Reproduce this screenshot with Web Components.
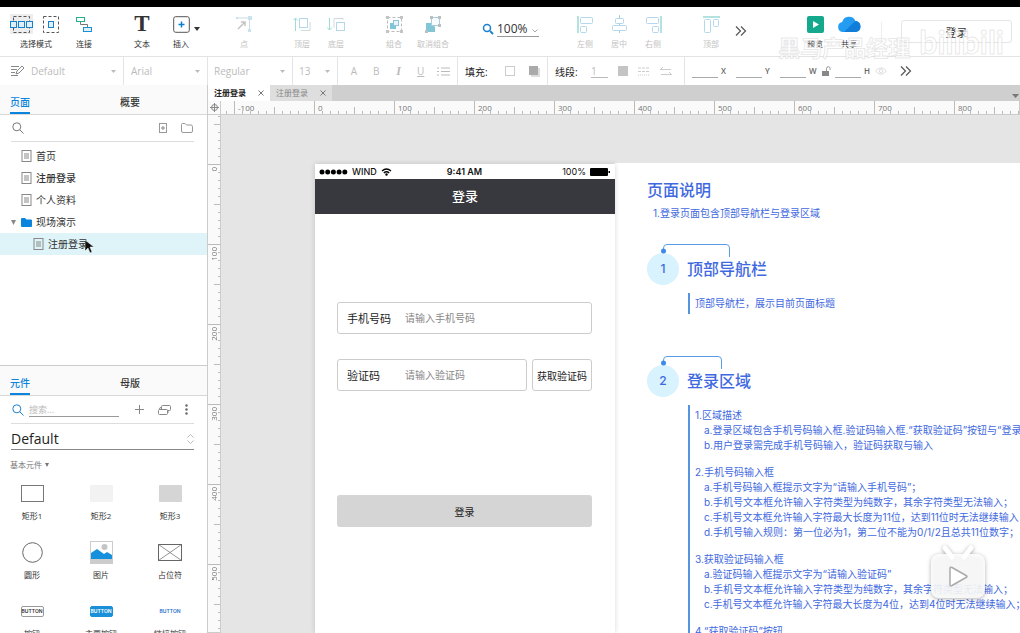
<!DOCTYPE html>
<html lang="zh-CN">
<head>
<meta charset="utf-8">
<title>注册登录</title>
<style>
html, body { margin: 0; height: 100%; }
body { overflow: hidden; font-family: "Open Sans", "Noto Sans CJK SC", sans-serif; color: #333; background: #fff; }
</style>
</head>
<body>
<ax-app></ax-app>
<script>
const BASE = `
*, *::before, *::after { box-sizing: border-box; }
button, input, select { font: inherit; color: inherit; border: 0; padding: 0; margin: 0; background: none; border-radius: 0; outline: 0; min-width: 0; }
select { appearance: none; }
svg { display: block; fill: none; flex: none; }
:host { box-sizing: border-box; }
`;
const svg = (w, h, body, extra = '') => `<svg width="${w}" height="${h}" viewBox="0 0 ${w} ${h}" aria-hidden="true" ${extra}>${body}</svg>`;

const ICONS = {
  select: svg(52, 20, `<rect x="0" y="0" width="23" height="20" fill="#ededed"/><rect x="3.500" y="2.500" width="16" height="16" stroke="#555" stroke-dasharray="3 2"/><g fill="#dff0fb" stroke="#1a80cc"><rect x=".5" y="7.500" width="6" height="6"/><rect x="8.500" y="7.500" width="6" height="6"/><rect x="16.500" y="7.500" width="6" height="6"/></g><rect x="33.500" y="2.500" width="15" height="16" stroke="#555" stroke-dasharray="3 2"/><rect x="38.500" y="7.500" width="5" height="6" fill="#dff0fb" stroke="#1a80cc"/>`),
  connect: svg(18, 20, `<rect x="1.500" y="3.500" width="8" height="4" stroke="#20b090"/><path d="M5.500 8v2.500h7V13" stroke="#777"/><rect x="8.500" y="13.500" width="8" height="4" fill="#dff0fb" stroke="#1a90d8"/>`),
  insert: svg(17, 20, `<rect x=".7" y="2.700" width="15.600" height="15.600" rx="2" stroke="#555"/><path d="M8.500 7.500v6M5.500 10.500h6" stroke="#0a7fd0" stroke-width="1.500"/>`),
  point: svg(18, 20, `<path d="M2 4h12.500v13" stroke="#ccdbe4"/><path d="M3 15l7-7M10 12V8H6" stroke="#c4c4c4" stroke-width="1.500"/><g fill="#c8e2ef"><rect x="13" y="2" width="4" height="4"/><rect x="13" y="15" width="3" height="3"/><rect x="1" y="3" width="2" height="2"/></g>`),
  front: svg(18, 20, `<path d="M2.500 17V4M0 6.500L2.500 4 5 6.500" stroke="#9fdad3"/><rect x="6.500" y="4.500" width="8" height="9" stroke="#b3d8ec"/><path d="M8 16.500h9V8" stroke="#cfdbe1"/>`),
  back: svg(18, 20, `<path d="M2.500 4v12M0 13.500L2.500 16 5 13.500" stroke="#9fdad3"/><rect x="9.500" y="8.500" width="8" height="8" stroke="#b3d8ec"/><path d="M7 13.500V4.500h9V6" stroke="#cfdbe1"/>`),
  group: svg(17, 20, `<rect x="1.500" y="3.500" width="14" height="14" stroke="#bcbcbc" stroke-dasharray="3 2"/><rect x="4" y="9" width="6" height="6" fill="#7ec6d8"/><rect x="7.500" y="6.500" width="5" height="5" fill="#e8f4fa" stroke="#8fc4e0"/><g fill="#c4c4c4"><rect y="2" width="3" height="3"/><rect x="14" y="2" width="3" height="3"/><rect y="16" width="3" height="3"/><rect x="14" y="16" width="3" height="3"/></g>`),
  ungroup: svg(17, 20, `<path d="M1 9h6l3 4v5H1z" fill="#80c6d5"/><rect x="6.500" y="3.500" width="8" height="8" fill="#fafdff" stroke="#a9cfe2"/><g fill="#b9bfc2"><rect x="5" y="2" width="3" height="3"/><rect x="13" y="2" width="3" height="3"/><rect x="13" y="10" width="3" height="3"/><rect x="0" y="16" width="3" height="3"/></g>`),
  left: svg(17, 20, `<path d="M1 2v17" stroke="#9ad8d4" stroke-width="1.500"/><rect x="3.500" y="3.500" width="12" height="6" rx="1" stroke="#b5d7ec"/><rect x="3.500" y="12.500" width="6" height="6" rx="1" stroke="#b5d7ec"/>`),
  center: svg(17, 20, `<path d="M8.500 1v18" stroke="#9ad8d4"/><rect x="4.500" y="4.500" width="8" height="5" rx="1" fill="#fff" stroke="#b5d7ec"/><rect x="1.500" y="11.500" width="14" height="5" rx="1" fill="#fff" stroke="#b5d7ec"/>`),
  right: svg(17, 20, `<path d="M16 2v17" stroke="#9ad8d4" stroke-width="1.500"/><rect x="1.500" y="3.500" width="12" height="6" rx="1" stroke="#b5d7ec"/><rect x="7.500" y="12.500" width="6" height="6" rx="1" stroke="#b5d7ec"/>`),
  top: svg(17, 20, `<path d="M0 3h17" stroke="#9ad8d4" stroke-width="1.500"/><rect x="1.500" y="5.500" width="6" height="13" rx="1" stroke="#b5d7ec"/><rect x="10.500" y="5.500" width="5" height="7" rx="1" stroke="#b5d7ec"/>`),
  preview: svg(17, 20, `<rect y="2" width="17" height="17" rx="2" fill="#14a88c"/><path d="M6 7l6 3.500L6 14z" fill="#fff"/>`),
  share: svg(25, 20, `<path d="M6 18a5 5 0 0 1-.8-9.900A7 7 0 0 1 18.500 7 5.600 5.600 0 0 1 19 18z" fill="#249cf2"/><path d="M19 18H7l10-10 2-1a5.600 5.600 0 0 1 0 11z" fill="#117fd9"/>`),
  more: svg(12, 12, `<path d="M1 1.500L5.500 6 1 10.500M6 1.500L10.500 6 6 10.500" stroke="#555" stroke-width="1.200"/>`),
  caret: svg(6, 4, `<path d="M0 0h6L3 4z" fill="#333"/>`),
  page: svg(10, 12, `<rect x=".5" y=".5" width="9" height="11" stroke="#888"/><path d="M2.500 4h5M2.500 6h5M2.500 8h5" stroke="#888"/>`),
  folder: svg(11, 9, `<path d="M0 1q0-1 1-1h3l1.500 1.500H10q1 0 1 1V8q0 1-1 1H1q-1 0-1-1z" fill="#0a84dc"/>`),
  search: c => svg(12, 12, `<circle cx="4.800" cy="4.800" r="4" stroke="${c}"/><path d="M8 8l3.500 3.500" stroke="${c}"/>`),
};

function define(name, render, styles) {
  customElements.define(name, class extends HTMLElement {
    constructor() {
      super();
      this.attachShadow({ mode: 'open' });
    }
    connectedCallback() {
      if (this.shadowRoot.firstChild) return;
      const t = document.createElement('template');
      t.innerHTML = `<style>${BASE}${styles}</style>${render(this)}`;
      this.shadowRoot.append(t.content.cloneNode(true));
    }
  });
}

/* ---------- top toolbar ---------- */
define('ax-tool', el => `<button ${el.hasAttribute('disabled') ? 'disabled' : ''}>
  <span class="icon">${el.getAttribute('icon') === 'text' ? '<b>T</b>' : ICONS[el.getAttribute('icon')]}${el.hasAttribute('menu') ? `<i>${ICONS.caret}</i>` : ''}</span>
  <span><slot></slot></span></button>`, `
:host { display: block; flex: none; width: 34px; }
:host([wide]) { width: 52px; }
button { display: flex; flex-direction: column; align-items: center; gap: 5px; width: 100%; font-size: 8px; line-height: 10px; white-space: nowrap; color: #333; }
button:disabled { color: #c2c2c2; }
.icon { position: relative; height: 20px; }
b { font: 700 23px/20px "Liberation Serif", serif; }
i { position: absolute; left: 21px; top: 13px; }
`);

define('ax-toolbar', () => `
<ax-tool wide icon="select">选择模式</ax-tool>
<ax-tool class="s" icon="connect">连接</ax-tool>
<ax-tool class="l" icon="text">文本</ax-tool>
<ax-tool class="s" icon="insert" menu>插入</ax-tool>
<ax-tool class="xl" icon="point" disabled>点</ax-tool>
<ax-tool class="l" icon="front" disabled>顶层</ax-tool>
<ax-tool icon="back" disabled>底层</ax-tool>
<ax-tool class="l" icon="group" disabled>组合</ax-tool>
<ax-tool class="s" icon="ungroup" disabled>取消组合</ax-tool>
<label class="zoom">${svg(12, 12, '<circle cx="5" cy="5" r="3.500" stroke="#1a80d0" stroke-width="1.500"/><path d="M8 8l3 3" stroke="#1a80d0" stroke-width="1.800"/>')}
<select aria-label="缩放"><option>100%</option></select>${svg(6, 4, '<path d="M.5.5L3 3 5.500.5" stroke="#aaa"/>', 'class="c"')}</label>
<ax-tool class="l" icon="left" disabled>左侧</ax-tool>
<ax-tool icon="center" disabled>居中</ax-tool>
<ax-tool icon="right" disabled>右侧</ax-tool>
<ax-tool class="l" icon="top" disabled>顶部</ax-tool>
<button class="more" aria-label="更多">${ICONS.more}</button>
<div class="end"><ax-tool icon="preview">预览</ax-tool><ax-tool icon="share">共享</ax-tool><hr><button class="login">登录</button></div>
<div class="mark"><span>黑马产品经理</span><em>bilibili</em></div>
`, `
:host { position: relative; display: flex; flex: none; height: 50px; padding: 7px 8px 0 10px; border-bottom: 1px solid #e4e4e4; background: #fff; }
.s { margin-left: 5px; } .l { margin-left: 24px; } .xl { margin-left: 29px; }
.zoom { position: relative; display: flex; align-items: center; gap: 3px; height: 16px; margin: 7px 5px 0 32px; }
.zoom select { width: 42px; height: 16px; border-bottom: 1px solid #999; font-size: 12px; line-height: 14px; color: #333; }
.zoom .c { position: absolute; right: 1px; top: 8px; }
.more { align-self: flex-start; margin: 11px 0 0 7px; }
.end { display: flex; margin-left: auto; }
hr { width: 1px; height: 22px; margin: 8px 19px 0 15px; border: 0; background: #eee; }
.login { width: 111px; height: 23px; margin-top: 6px; border: 1px solid #e6e6e6; border-radius: 3px; font-size: 11px; }
.mark { position: absolute; right: 16px; top: 16px; display: flex; align-items: center; gap: 9px; color: rgba(255,255,255,.75); -webkit-text-stroke: 1px rgba(190,190,190,.35); white-space: nowrap; pointer-events: none; z-index: 2; }
.mark span { padding-top: 10px; font-size: 22px; line-height: 28px; font-weight: 700; }
.mark em { font: 700 32px/36px Lato, sans-serif; }
`);

/* ---------- format bar ---------- */
define('ax-pick', el => `<select disabled aria-label="${el.getAttribute('label')}"><option>${el.getAttribute('value')}</option></select>${svg(5, 3, '<path d="M0 0h5L2.500 3z" fill="#bbb"/>')}`, `
:host { display: flex; align-items: center; width: 100%; }
select { flex: 1; font-size: 10px; line-height: 14px; color: #bbb; opacity: 1; }
`);
define('ax-coord', el => `<label><input aria-label="${el.textContent}" disabled><b><slot></slot></b></label>`, `
:host { display: block; }
label { display: flex; align-items: center; gap: 3px; }
input { width: 26px; height: 13px; border-bottom: 1px solid #aaa; }
b { width: 9px; font-size: 8px; line-height: 12px; font-weight: 600; color: #666; }
`);
define('ax-format-bar', () => `
<div class="cell a">${svg(13, 12, '<path d="M0 1.500h8M0 4.500h6M0 7.500h4M0 10.500h7" stroke="#888"/><path d="M5 9l1-3 5-5 2 2-5 5z" fill="#fff" stroke="#888"/>')}<ax-pick label="样式" value="Default"></ax-pick></div>
<div class="cell b"><ax-pick label="字体" value="Arial"></ax-pick></div>
<div class="cell c"><ax-pick label="字重" value="Regular"></ax-pick></div>
<div class="cell d"><ax-pick label="字号" value="13"></ax-pick></div>
<div class="cell e"><button>A</button><button>B</button><button><i>I</i></button><button><u>U</u></button><button aria-label="列表">${svg(13, 9, '<path d="M0 1h2M0 4.500h2M0 8h2M4 1h9M4 4.500h9M4 8h9" stroke="#bbb"/>')}</button></div>
<div class="cell f"><span>填充:</span>${svg(10, 10, '<rect x=".5" y=".5" width="9" height="9" stroke="#ccc"/>')}${svg(11, 11, '<rect x="2" y="2" width="9" height="9" fill="#ddd"/><rect width="9" height="9" fill="#aaa"/>')}</div>
<div class="cell g"><span>线段:</span><input value="1" aria-label="线宽" disabled>${svg(10, 10, '<rect width="10" height="10" fill="#c4c4c4"/>')}${svg(12, 9, '<path d="M0 1h12M0 4.500h12" stroke="#ccc" stroke-dasharray="3 1"/><path d="M0 8h12" stroke="#ccc" stroke-dasharray="1 1"/>')}${svg(12, 9, '<path d="M0 2.500h11M3 0L.5 2.500M1 7.500h11M9 5l2.500 2.500" stroke="#ccc"/>')}</div>
<div class="cell h"><ax-coord>X</ax-coord><ax-coord>Y</ax-coord><ax-coord>W</ax-coord>${svg(9, 10, '<rect y="5" width="7" height="5" fill="#888"/><path d="M4.500 5V2.500a1.800 1.800 0 0 1 3.600 0V4" stroke="#999"/>', 'class="lock"')}<ax-coord>H</ax-coord>${svg(12, 8, '<path d="M.5 4Q6-2.500 11.500 4 6 10.500.5 4z" stroke="#ddd"/><circle cx="6" cy="4" r="1.800" stroke="#ddd"/>', 'class="eye"')}<button aria-label="更多">${ICONS.more}</button></div>
`, `
:host { display: flex; flex: none; height: 28px; background: #fff; font-size: 10px; }
.cell { display: flex; align-items: center; flex: none; border-right: 1px solid #e4e4e4; }
.a { width: 124px; padding: 0 7px 0 11px; gap: 7px; }
.b { width: 84px; padding: 0 7px; }
.c { width: 85px; padding: 0 7px 0 6px; }
.d { width: 45px; padding: 0 7px 0 6px; }
.e { width: 120px; justify-content: space-between; padding: 0 8px 0 10px; color: #bbb; }
.e button { display: flex; justify-content: center; width: 12px; line-height: 14px; }
.e i { font-family: "Liberation Serif", serif; font-size: 12px; font-weight: 700; }
.f { width: 90px; padding-left: 7px; gap: 14px; }
.f span, .g span { width: 26px; color: #222; }
.g { width: 137px; padding-left: 7px; gap: 10px; }
.g input { width: 17px; height: 14px; border-bottom: 1px solid #bbb; color: #bbb; }
.h { flex: 1; border: 0; padding-left: 7px; gap: 6px; }
.lock { margin: 0 -2px 0 -2px; } .eye { margin-left: -4px; } .h button { margin-left: 7px; }
`);

/* ---------- side panels ---------- */
define('ax-panel-tabs', el => { const [a, b] = el.getAttribute('tabs').split(','); return `<button class="on" role="tab" aria-selected="true">${a}</button><button role="tab">${b}</button>`; }, `
:host { display: flex; flex: none; gap: 90px; height: 30px; padding: 4px 10px 0; border-bottom: 1px solid #d8d8d8; background: #fafafa; }
button { width: 20px; border-bottom: 2px solid transparent; font-size: 10px; line-height: 26px; font-weight: 500; white-space: nowrap; color: #333; }
.on { color: #0a84dc; border-color: #0a84dc; }
`);
define('ax-page', el => `<i>${el.hasAttribute('folder') ? svg(5, 5, '<path d="M0 0h5L2.500 5z" fill="#888"/>') : ''}</i>${el.hasAttribute('folder') ? ICONS.folder : ICONS.page}<a href="#"><slot></slot>${el.hasAttribute('selected') ? svg(9, 14, '<path d="M0 0v11l3-3 2 5 2-1-2-5h4z" fill="#111" stroke="#fff" stroke-width=".5"/>') : ''}</a>`, `
:host { display: flex; align-items: center; height: 22px; padding-left: 11px; font-size: 10px; }
:host([selected]) { padding-left: 23px; background: #def4f8; }
:host([strong]) { font-weight: 500; }
i { width: 10px; }
i + svg { width: 11px; }
a { position: relative; margin-left: 4px; color: #333; text-decoration: none; line-height: 16px; }
a svg { position: absolute; right: -6px; top: 4px; }
`);
define('ax-pages-panel', () => `
<ax-panel-tabs tabs="页面,概要"></ax-panel-tabs>
<div class="tools"><button class="find" aria-label="搜索">${ICONS.search('#777')}</button>
<button aria-label="添加页面">${svg(9, 10, '<rect x=".5" y=".5" width="7" height="9" stroke="#999"/><path d="M4 3v4M2 5h4" stroke="#888"/>')}</button>
<button aria-label="添加文件夹">${svg(12, 10, '<path d="M.5 1.500q0-1 1-1H4l1.500 1.500H10q1.500 0 1.500 1.500V8q0 1.500-1.500 1.500H2Q.5 9.500.5 8z" stroke="#999"/>')}</button></div>
<nav><ax-page>首页</ax-page><ax-page strong>注册登录</ax-page><ax-page>个人资料</ax-page><ax-page folder>现场演示</ax-page><ax-page selected>注册登录</ax-page></nav>
`, `
:host { display: flex; flex-direction: column; flex: 281 1 0; min-height: 0; overflow: hidden; }
.tools { display: flex; align-items: center; gap: 13px; height: 27px; margin: 0 13px 3px 11px; padding: 0 1px; border-bottom: 1px solid #ddd; }
.find { margin-right: auto; }
`);

define('ax-widget', el => `<button><span>${el.querySelector('template').innerHTML}</span>${el.getAttribute('name')}</button>`, `
:host { display: block; width: 44px; }
button { display: flex; flex-direction: column; align-items: center; gap: 6px; width: 100%; font-size: 8px; line-height: 10px; white-space: nowrap; }
span { display: flex; align-items: center; justify-content: center; height: 24px; }
.btn { width: 23px; height: 11px; border: 1px solid #999; border-radius: 2px; font: 600 5px/9px Inter, sans-serif; text-align: center; }
.pri { background: #1a90d8; border-color: #1a90d8; color: #fff; }
.lnk { border: 0; color: #2a70c8; line-height: 11px; }
`);
const widget = (name, body) => `<ax-widget name="${name}"><template>${body}</template></ax-widget>`;
define('ax-library', () => `
<ax-panel-tabs tabs="元件,母版"></ax-panel-tabs>
<div class="tools"><label>${ICONS.search('#1a80d0')}<input placeholder="搜索..." aria-label="搜索元件"></label>
<button aria-label="添加">${svg(9, 9, '<path d="M4.500 0v9M0 4.500h9" stroke="#888"/>')}</button>
<button aria-label="元件库">${svg(13, 10, '<rect x="3.500" y=".5" width="9" height="5" rx="1" stroke="#888"/><path d="M3 2.500q-1.500 0-1.500 1.500v1M10 8V6" stroke="#888"/><rect x=".5" y="4.500" width="9" height="5" rx="1" fill="#fff" stroke="#888"/>')}</button>
<button aria-label="菜单">${svg(3, 11, '<g fill="#666"><circle cx="1.500" cy="1.500" r="1.200"/><circle cx="1.500" cy="5.500" r="1.200"/><circle cx="1.500" cy="9.500" r="1.200"/></g>')}</button></div>
<div class="lib"><select aria-label="元件库"><option>Default</option></select>${svg(7, 10, '<path d="M.5 3.500l3-3 3 3M.5 6.500l3 3 3-3" stroke="#bbb"/>')}</div>
<button class="cat">基本元件 ${svg(4, 4, '<path d="M0 0h4L2 4z" fill="#777"/>')}</button>
<div class="grid">
${widget('矩形1', svg(23, 17, '<rect x=".5" y=".5" width="22" height="16" stroke="#777"/>'))}
${widget('矩形2', svg(23, 17, '<rect width="23" height="17" rx="1" fill="#f2f2f2"/>'))}
${widget('矩形3', svg(23, 17, '<rect width="23" height="17" rx="1" fill="#d5d5d5"/>'))}
${widget('圆形', svg(21, 21, '<circle cx="10.500" cy="10.500" r="9.800" stroke="#666"/>'))}
${widget('图片', svg(23, 23, '<rect x=".5" y=".5" width="22" height="22" fill="#fff" stroke="#ccc"/><circle cx="14.500" cy="6" r="3" fill="#c4c4c4"/><path d="M1 18v-6l6-4 7 5 3-2 5 3v4z" fill="#1590dc"/><path d="M0 18h23v5H0z" fill="#ccc"/>'))}
${widget('占位符', svg(24, 17, '<rect x=".5" y=".5" width="23" height="16" stroke="#666"/><path d="M.5.5l23 16M23.500.5l-23 16" stroke="#777" stroke-width=".8"/>'))}
${widget('按钮', '<div class="btn">BUTTON</div>')}
${widget('主要按钮', '<div class="btn pri">BUTTON</div>')}
${widget('链接按钮', '<div class="btn lnk">BUTTON</div>')}
</div>`, `
:host { display: flex; flex-direction: column; flex: 267 1 0; min-height: 0; overflow: hidden; border-top: 1px solid #ccc; }
.tools { display: flex; flex: none; align-items: center; gap: 14px; height: 28px; margin: 0 13px 0 11px; padding: 0 6px 0 1px; border-bottom: 1px solid #ddd; }
label { display: flex; align-items: center; gap: 5px; flex: 1; }
input { flex: 1; width: 40px; height: 15px; border-bottom: 1px solid #999; font-size: 9px; }
input::placeholder { color: #bbb; }
.tools button:first-of-type { margin-left: 2px; }
.lib { display: flex; flex: none; align-items: center; height: 26px; margin: 0 13px 0 11px; padding-top: 5px; border-bottom: 1px solid #888; }
.lib select { flex: 1; font-size: 14px; line-height: 20px; color: #222; }
.cat { display: flex; align-items: center; gap: 3px; margin: 9px 10px 10px; font-size: 8px; line-height: 12px; color: #777; }
.grid { display: grid; grid-template-columns: repeat(3, 44px); justify-content: space-between; row-gap: 19px; padding: 0 15px 0 10px; }
`);

/* ---------- workspace ---------- */
define('ax-doc-tabs', () => `<button class="on">注册登录<i>${svg(6, 6, '<path d="M.5.5l5 5M5.500.5l-5 5" stroke="#777"/>')}</i></button><button>注册登录<i>${svg(6, 6, '<path d="M.5.5l5 5M5.500.5l-5 5" stroke="#777"/>')}</i></button><span>${svg(7, 4, '<path d="M0 0h7L3.500 4z" fill="#777"/>')}</span>`, `
:host { display: flex; flex: none; height: 16px; background: #cfcfcf; }
button { display: flex; align-items: center; justify-content: space-between; width: 62px; padding: 0 6px; font-size: 8px; line-height: 14px; background: #dedede; color: #888; }
.on { background: #fff; color: #222; font-weight: 700; }
span { margin: 9px 1px 0 auto; }
`);
const ticks = v => svg(v ? 13 : 80, v ? 80 : 13, Array.from({ length: 10 }, (_, i) => {
  const p = i * 8 + .5, s = i === 0 ? 0 : i === 5 ? 6 : 10;
  return v ? `<path d="M${s} ${p}H13" stroke="#bbb"/>` : `<path d="M${p} ${s}V13" stroke="#bbb"/>`;
}).join(''));
/* one cell per 100 canvas units, as many as the window can show */
define('ax-ruler', el => {
  const v = el.hasAttribute('vertical');
  const from = v ? -100 : -200;
  const n = Math.ceil((v ? innerHeight - 84 : innerWidth - 154) / 80);
  return Array.from({ length: n }, (_, i) => `<div>${ticks(v)}${i ? `<span>${from + i * 100}</span>` : ''}</div>`).join('');
}, `
:host { display: flex; overflow: hidden; min-width: 0; min-height: 0; background: #fafafa; font-size: 8px; line-height: 11px; color: #777; }
:host([vertical]) { flex-direction: column; }
div { position: relative; flex: none; width: 80px; height: 13px; }
:host([vertical]) div { width: 13px; height: 80px; }
div:first-of-type { margin-left: -67px; }
:host([vertical]) div:first-of-type { margin: -31px 0 0; }
span { position: absolute; left: 4px; top: 1px; }
:host([vertical]) span { left: 0; top: 3px; writing-mode: vertical-rl; transform: rotate(180deg); }
`);

define('ax-field', el => `<label><span>${el.getAttribute('label')}</span><input placeholder="${el.getAttribute('hint')}"></label>`, `
:host { display: block; flex: 1; min-width: 0; }
label { display: flex; align-items: center; height: 32px; padding: 0 9px; border: 1px solid #ccc; border-radius: 3px; background: #fff; }
span { flex: none; width: 58px; font-size: 11px; color: #222; }
input { flex: 1; font-size: 10px; }
input::placeholder { color: #888; }
`);
define('ax-phone', () => `
<div class="status"><span>${svg(29, 6, '<g fill="#000"><circle cx="3" cy="3" r="2.500"/><circle cx="8.700" cy="3" r="2.500"/><circle cx="14.400" cy="3" r="2.500"/><circle cx="20.100" cy="3" r="2.500"/><circle cx="25.800" cy="3" r="2.500"/></g>')} WIND ${svg(11, 8, '<path d="M1 3Q5.500-1 10 3M2.800 5Q5.500 2.500 8.200 5" stroke="#000" stroke-width="1.300"/><circle cx="5.500" cy="6.500" r="1.200" fill="#000"/>')}</span><b>9:41 AM</b><span class="r">100% ${svg(20, 8, '<rect width="18" height="8" rx="1" fill="#000"/><rect x="18.500" y="3" width="1.500" height="2" fill="#000"/>')}</span></div>
<header>登录</header>
<form><ax-field label="手机号码" hint="请输入手机号码"></ax-field>
<div><ax-field label="验证码" hint="请输入验证码"></ax-field><button type="button" class="code">获取验证码</button></div>
<button type="button" class="go">登录</button></form>`, `
:host { position: relative; z-index: 1; display: flex; flex-direction: column; flex: none; width: 300px; margin-top: 1px; background: #fff; box-shadow: 0 0 5px rgba(0,0,0,.16); color: #222; }
.status { display: grid; grid-template-columns: 1fr auto 1fr; align-items: center; height: 15px; padding: 0 5px 0 4px; font: 500 9px/15px Inter, sans-serif; color: #111; }
.status span { display: flex; align-items: center; gap: 4px; }
.status .r { justify-content: flex-end; font-weight: 400; }
.status b { font-weight: 600; }
header { height: 35px; background: #38393e; color: #fff; text-align: center; font-size: 13px; line-height: 34px; font-weight: 500; }
form { display: flex; flex-direction: column; padding: 88px 23px 0 22px; }
form > div { display: flex; gap: 5px; margin: 25px 0 104px; }
form > ax-field { flex: none; }
.code { width: 60px; border: 1px solid #ccc; border-radius: 3px; font-size: 10px; white-space: nowrap; }
.go { height: 32px; border-radius: 3px; background: #d5d5d5; font-size: 10px; }
`);

define('ax-note', el => {
  const w = +el.getAttribute('lead');
  return `${svg(w + 6, 14, `<path d="M3.500 7V4q0-3.500 3.500-3.500h${w - 8}q3.500 0 3.500 3.500v9" stroke="#5a9be8"/><circle cx="3.500" cy="7" r="2.500" fill="#3b8be8"/>`)}
  <h2><b>${el.getAttribute('n')}</b>${el.getAttribute('title')}</h2><div><slot></slot></div>`;
}, `
:host { position: relative; display: block; padding-top: 9px; }
svg { position: absolute; left: 13px; top: 0; }
h2 { display: flex; align-items: center; gap: 8px; margin: 0 0 8px; font-size: 16px; line-height: 32px; font-weight: 500; }
b { width: 32px; height: 32px; border-radius: 16px; background: #d8f2fe; text-align: center; font-size: 12px; font-weight: 500; }
div { margin-left: 41px; min-height: 21px; padding: 3px 0 3px 5px; border-left: 2px solid #5595e0; line-height: 15px; white-space: nowrap; }
`);
define('ax-notes', () => `
<h1>页面说明</h1><p class="sub">1.登录页面包含顶部导航栏与登录区域</p>
<ax-note n="1" title="顶部导航栏" lead="67">顶部导航栏，展示目前页面标题</ax-note>
<ax-note n="2" title="登录区域" lead="59">
<p>1.区域描述</p><ul><li>a.登录区域包含手机号码输入框.验证码输入框.“获取验证码”按钮与“登录”按钮</li><li>b.用户登录需完成手机号码输入，验证码获取与输入</li></ul>
<p>2.手机号码输入框</p><ul><li>a.手机号码输入框提示文字为“请输入手机号码”；</li><li>b.手机号文本框允许输入字符类型为纯数字，其余字符类型无法输入；</li><li>c.手机号文本框允许输入字符最大长度为11位，达到11位时无法继续输入；</li><li>d.手机号输入规则：第一位必为1，第二位不能为0/1/2且总共11位数字；</li></ul>
<p>3.获取验证码输入框</p><ul><li>a.验证码输入框提示文字为“请输入验证码”</li><li>b.手机号文本框允许输入字符类型为纯数字，其余字符类型无法输入；</li><li>c.手机号文本框允许输入字符最大长度为4位，达到4位时无法继续输入；</li></ul>
<p>4.“获取验证码”按钮</p></ax-note>`, `
:host { display: flex; flex-direction: column; flex: 1; min-width: 0; padding: 17px 0 0 32px; background: #fff; color: #3f69e0; font-family: Inter, "Noto Sans CJK SC", sans-serif; font-size: 10px; line-height: 15px; }
h1 { margin: 0 0 6px; font-size: 16px; line-height: 20px; font-weight: 500; }
p, ul { margin: 0; padding: 0; list-style: none; }
.sub { margin: 0 0 24px 6px; line-height: 14px; }
ax-note + ax-note { margin-top: 42px; }
ul { padding-left: 9px; margin-bottom: 12px; }
`);

define('ax-app', () => `
<div class="strip"></div>
<ax-toolbar></ax-toolbar><ax-format-bar></ax-format-bar>
<main><aside><ax-pages-panel></ax-pages-panel><ax-library></ax-library></aside>
<section><ax-doc-tabs></ax-doc-tabs>
<div class="work"><div class="corner">${svg(9, 9, '<circle cx="4.500" cy="4.500" r="3" stroke="#888"/><path d="M4.500 0v9M0 4.500h9" stroke="#888"/>')}</div><ax-ruler></ax-ruler><ax-ruler vertical></ax-ruler>
<div class="canvas"><ax-phone></ax-phone><ax-notes></ax-notes></div></div></section></main>
<div class="tv">${svg(62, 62, '<path d="M18 5l7 9M44 5l-7 9" stroke="#fff" stroke-width="5" stroke-linecap="round"/><rect x="4" y="11" width="54" height="44" rx="8" fill="#fff" fill-opacity=".88"/><path d="M23 25.500q0-2 2-1l14 8q2 1 0 2l-14 8q-2 1-2-1z" fill="#fff" stroke="#aaa" stroke-width="1.500"/>')}</div>
`, `
:host { display: flex; flex-direction: column; height: 100vh; overflow: hidden; }
.strip { flex: none; height: 7px; background: #000; }
main { display: flex; flex: 1; min-height: 0; }
aside { display: flex; flex-direction: column; flex: none; width: 208px; border-right: 1px solid #ccc; }
section { display: flex; flex-direction: column; flex: 1; min-width: 0; }
.work { display: grid; grid-template: 14px minmax(0, 1fr) / 13px minmax(0, 1fr); flex: 1; min-height: 0; }
.corner { display: grid; place-items: center; background: #fafafa; }
.corner, ax-ruler { border-bottom: 1px solid #ccc; border-right: 1px solid #ccc; }
.canvas { display: flex; min-width: 0; min-height: 0; padding: 48px 0 0 94px; background: #e5e5e5; overflow: hidden; }
.tv { position: absolute; right: 31px; bottom: 28px; z-index: 3; filter: drop-shadow(0 1px 2px rgba(0,0,0,.35)); }
`);
</script>
</body>
</html>
